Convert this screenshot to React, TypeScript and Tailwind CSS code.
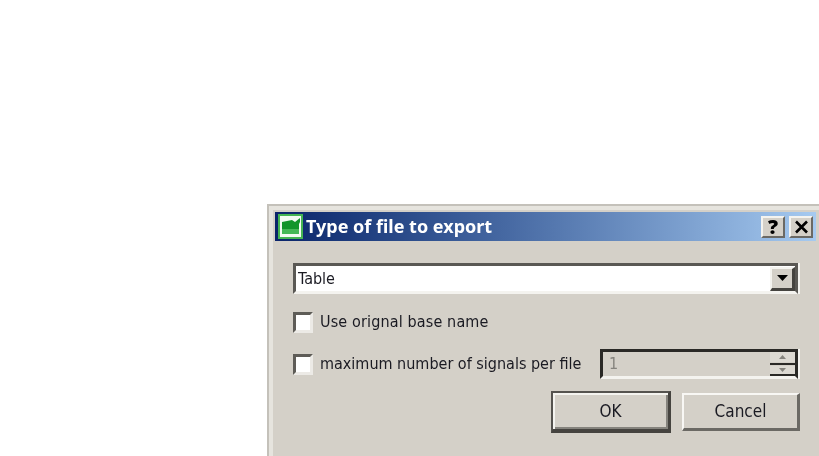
const labelFont = "font-['DejaVu_Sans_Condensed','DejaVu_Sans',sans-serif]";

const raised =
  "border-2 border-t-[#f4f3ef] border-l-[#f4f3ef] border-r-[#6b6964] border-b-[#6b6964] bg-[#d4d0c8]";

function CaptionButton({ children }: { children: React.ReactNode }) {
  return (
    <div
      className={`flex h-[22px] w-[24px] items-center justify-center text-[20px] font-black leading-none text-black ${raised}`}
    >
      {children}
    </div>
  );
}

function Check() {
  return (
    <div className="h-[21px] w-[20px] shrink-0 border-[3px] border-t-[#5e5c57] border-l-[#5e5c57] border-r-[#eceae6] border-b-[#eceae6] bg-white" />
  );
}

function AppIcon() {
  return (
    <svg width="25" height="25" viewBox="0 0 25 25" className="shrink-0">
      <rect x="0" y="0" width="25" height="25" fill="#45b553" />
      <rect x="2" y="2" width="21" height="21" fill="#f2fbf2" />
      <path d="M4 8 L14 6 L17 8 L22 4 V8 L21 10 V20 H4 Z" fill="#12952a" />
      <path d="M4 15 H21 V20 H4 Z" fill="#45b856" />
    </svg>
  );
}

export default function App() {
  return (
    <div className="h-[456px] w-[819px] overflow-hidden bg-white pl-[267px] pt-[204px]">
      <div className="h-[252px] w-[552px] border-l-2 border-t-2 border-l-[#c4c1ba] border-t-[#c4c1ba] blur-[0.5px]">
        <div className="h-full border-l-4 border-t-4 border-l-[#e6e4de] border-t-[#e6e4de] bg-[#d4d0c8] pl-[2px] pt-[2px] font-['Noto_Sans',sans-serif]">
          <div className="flex h-[29px] w-[541px] items-center bg-gradient-to-r from-[#0a246a] to-[#a6caf0] pl-[3px] pr-[3px]">
            <AppIcon />
            <span className="mb-[2px] ml-[3px] text-[18px] font-bold leading-none text-white">
              Type of file to export
            </span>
            <div className="ml-auto flex gap-[4px]">
              <CaptionButton>?</CaptionButton>
              <CaptionButton>
                <svg width="15" height="14" viewBox="0 0 15 14">
                  <path d="M2 1.5 L13 12.5 M13 1.5 L2 12.5" stroke="#000" strokeWidth="2.6" />
                </svg>
              </CaptionButton>
            </div>
          </div>

          <div className={`pl-[18px] pr-[16px] text-[16px] text-[#1a1a22] ${labelFont}`}>
            <div className="mt-[22px] flex h-[31px] w-[505px] items-center border-[3px] border-t-[#5a5854] border-l-[#5a5854] border-r-[#5a5854] border-b-[#f4f3ef] bg-white pl-[2px] shadow-[2px_0_0_#f4f3ef]">
              <span>Table</span>
              <div className="ml-auto flex h-[24px] w-[25px] items-center justify-center border-2 border-b-[3px] border-r-[3px] border-t-[#f4f3ef] border-l-[#f4f3ef] border-r-[#45433f] border-b-[#45433f] bg-[#d4d0c8]">
                <svg width="11" height="6" viewBox="0 0 11 6">
                  <path d="M0 0 H11 L5.5 6 Z" fill="#000" />
                </svg>
              </div>
            </div>

            <div className="mt-[17px] flex h-[22px] items-center">
              <Check />
              <span className="ml-[7px] tracking-[0.14px]">Use orignal base name</span>
            </div>

            <div className="mt-[16px] flex h-[30px] items-center">
              <Check />
              <span className="ml-[7px] w-[280px] whitespace-nowrap">
                maximum number of signals per file
              </span>
              <div className="flex h-[30px] w-[198px] items-center border-[3px] border-t-[#2a2926] border-l-[#2a2926] border-r-[#2a2926] border-b-[#f4f3ef] pl-[6px] text-[#85837d] shadow-[2px_0_0_#f4f3ef]">
                <span>1</span>
                <div className="ml-auto flex h-[24px] w-[25px] flex-col justify-between">
                  <div className="flex h-[10px] items-center justify-center bg-[#dcd9d2]">
                    <svg width="7" height="4" viewBox="0 0 7 4">
                      <path d="M3.5 0 L7 4 H0 Z" fill="#85837d" />
                    </svg>
                  </div>
                  <div className="h-[2px] bg-[#2a2926]" />
                  <div className="flex h-[10px] items-center justify-center border-b-2 border-b-[#2a2926] bg-[#dcd9d2]">
                    <svg width="7" height="4" viewBox="0 0 7 4">
                      <path d="M0 0 H7 L3.5 4 Z" fill="#85837d" />
                    </svg>
                  </div>
                </div>
              </div>
            </div>

            <div className="mt-[12px] flex w-[507px] items-center justify-end text-[17px]">
              <div className="flex h-[42px] w-[120px] items-center justify-center border-2 border-b-[4px] border-r-[3px] border-t-[#55534f] border-l-[#55534f] border-r-[#45433f] border-b-[#45433f] pt-[2px] shadow-[inset_2px_2px_0_#f4f3ef,inset_-2px_-2px_0_#85837d]">
                OK
              </div>
              <div className="ml-[11px] flex h-[38px] w-[118px] items-center justify-center border-2 border-b-[3px] border-r-[3px] border-t-[#f8f7f4] border-l-[#f8f7f4] border-r-[#6b6964] border-b-[#6b6964] bg-[#d4d0c8]">
                Cancel
              </div>
            </div>
          </div>
        </div>
      </div>
    </div>
  );
}
